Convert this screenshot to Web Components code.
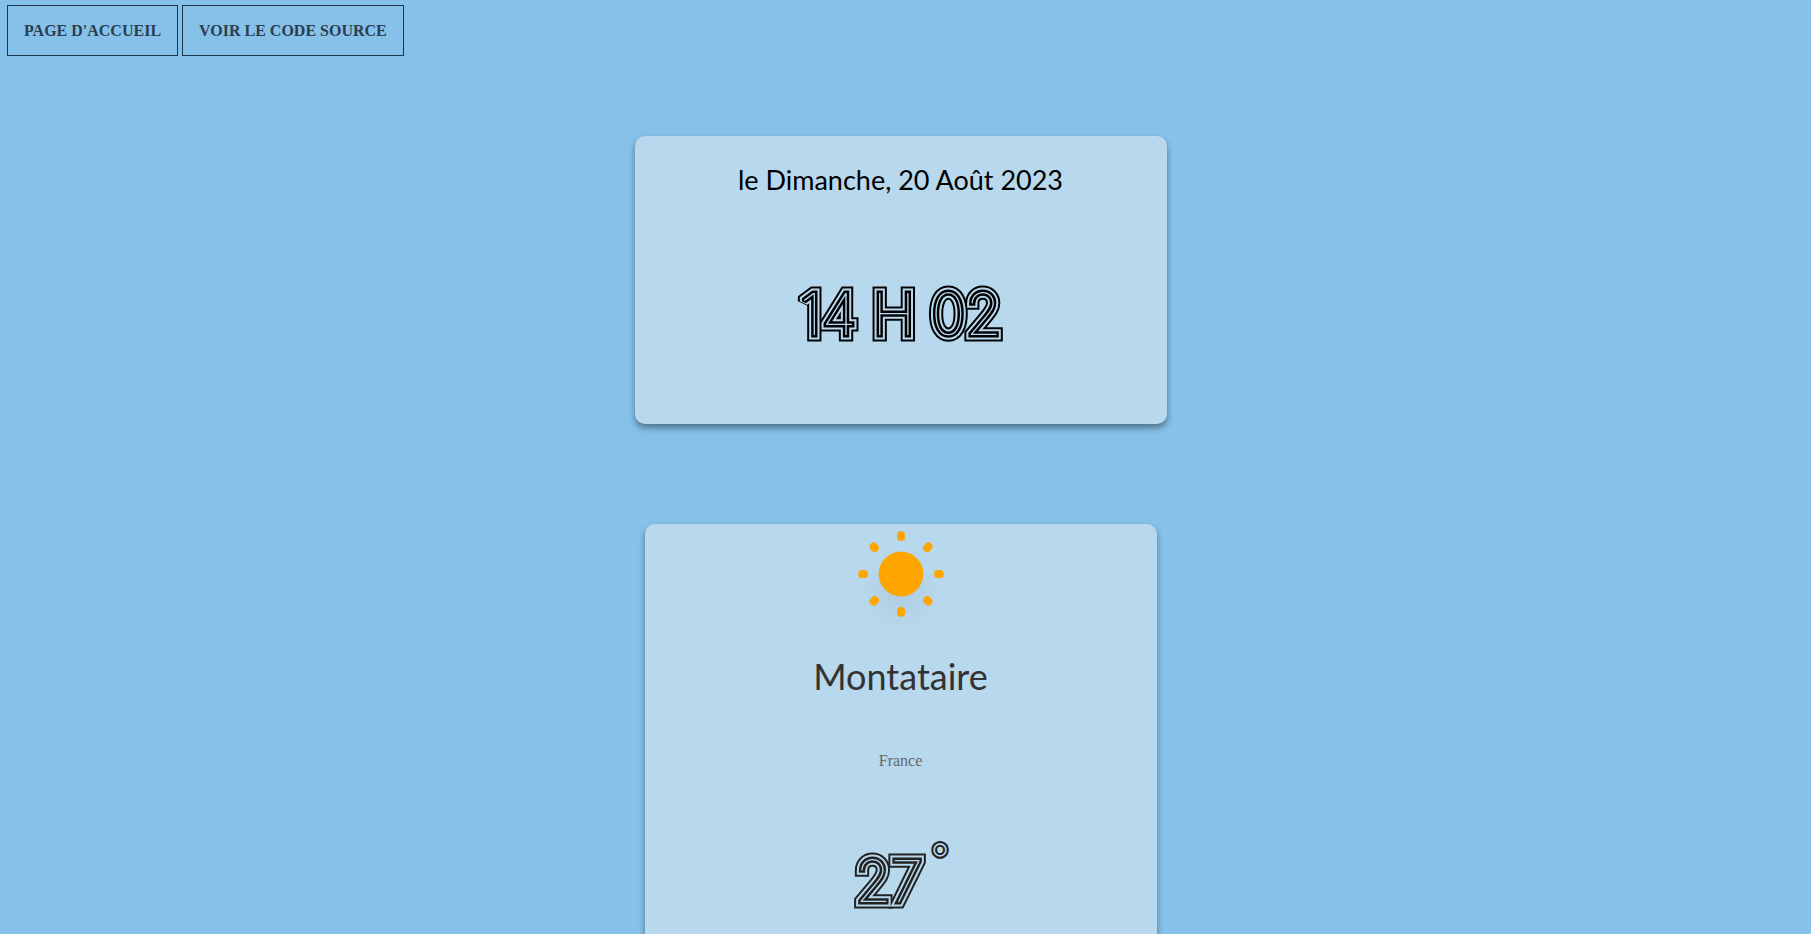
<!DOCTYPE html>
<html lang="fr">
<head>
<meta charset="utf-8">
<title>Météo</title>
<style>
  body { margin: 0; background: #85c1e9; font: 16px/24px "Liberation Serif", serif; color: #000; }
</style>
</head>
<body>
<weather-app></weather-app>
<script>
const define = (name, html, init) => {
  const template = document.createElement('template');
  template.innerHTML = html;
  customElements.define(name, class extends HTMLElement {
    constructor() {
      super();
      this.attachShadow({ mode: 'open' }).append(template.content.cloneNode(true));
    }
    connectedCallback() { if (init) init(this); }
  });
};

define('nav-link', `
  <style>
    :host { display: block; }
    a { display: block; padding: 16px; border: 1px solid #1f3349; color: #2c3e50;
        font-weight: bold; line-height: 17px; text-decoration: none; text-transform: uppercase; }
    a:hover { background: #b8d8ed; }
  </style>
  <a href="#"><slot></slot></a>`);

define('info-card', `
  <style>
    :host { display: flex; flex-direction: column; align-items: center; box-sizing: border-box;
            width: 100%; border-radius: 10px; background: var(--card);
            box-shadow: 0 4px 6px rgba(0, 0, 0, .4); text-align: center; }
  </style>
  <slot></slot>`);

/* Inline lettering: nested strokes around a light face leave parallel lines. */
define('neon-text', `
  <style>
    :host { display: block; align-self: stretch; }
    svg { display: block; width: 100%; height: 64px; overflow: visible;
          font: 100 58px Inter, sans-serif; text-anchor: middle; stroke-linejoin: miter; stroke-miterlimit: 2; }
    .outer { fill: var(--ink); stroke: var(--ink); stroke-width: 13px; }
    .gap { fill: var(--card); stroke: var(--card); stroke-width: 9px; }
    .inner { fill: var(--card); stroke: var(--ink); stroke-width: 5px; paint-order: stroke; }
    .unit { font-size: 46px; font-weight: 500; fill: var(--card); stroke: var(--ink); stroke-width: 2px; }
  </style>
  <svg>
    <g class="outer"><text id="label" x="50%" y="52"></text></g>
    <use class="gap" href="#label"/>
    <use class="inner" href="#label"/>
  </svg>`,
  host => {
    const label = host.shadowRoot.querySelector('#label');
    label.textContent = host.getAttribute('value');
    const unit = host.getAttribute('unit');
    if (unit) {
      label.setAttribute('dx', '-12');
      const mark = document.createElementNS('http://www.w3.org/2000/svg', 'text');
      mark.setAttribute('class', 'unit');
      mark.setAttribute('x', '50%');
      mark.setAttribute('dx', '39');
      mark.setAttribute('y', '26');
      mark.textContent = unit;
      host.shadowRoot.querySelector('svg').append(mark);
    }
  });

define('sun-icon', `
  <style>
    :host { display: block; }
    svg { display: block; overflow: visible; }
    .disc { filter: drop-shadow(0 18px 12px rgba(80, 90, 120, .09)); }
  </style>
  <svg width="100" height="100" viewBox="-50 -50 100 100" fill="orange" aria-hidden="true">
    <circle class="disc" r="22.4"/>
    <g id="rays"></g>
  </svg>`,
  host => {
    host.shadowRoot.querySelector('#rays').innerHTML = [0, 45, 90, 135, 180, 225, 270, 315].map(a =>
      '<rect x="-4" y="-42.7" width="8" height="9.6" rx="3.6" transform="rotate(' + a + ')"/>').join('');
  });

define('weather-app', `
  <style>
    :host { display: block; --card: #b8d8ed; }
    nav { display: flex; gap: 4px; padding: 5px 7px 0; }
    main { display: grid; justify-items: center; gap: 100px; padding: 80px 10px 100px 0; }
    .clock { max-width: 532px; min-height: 288px; padding-top: 24px; gap: 83px; }
    .city { max-width: 512px; min-height: 480px; }
    h1, h2, p { margin: 0; font-weight: normal; }
    h1 { font: 27px/40px Lato, sans-serif; }
    h2 { margin-top: 28px; color: #333; font: 36px/48px Lato, sans-serif; }
    p { margin-top: 49px; color: #666; }
    neon-text { --ink: #000; }
    .temp { --ink: #222; margin-top: 77px; }
  </style>
  <nav>
    <nav-link>Page d'accueil</nav-link>
    <nav-link>Voir le code source</nav-link>
  </nav>
  <main>
    <info-card class="clock">
      <h1>le Dimanche, 20 Août 2023</h1>
      <neon-text value="14 H 02"></neon-text>
    </info-card>
    <info-card class="city">
      <sun-icon></sun-icon>
      <h2>Montataire</h2>
      <p>France</p>
      <neon-text class="temp" value="27" unit="°"></neon-text>
    </info-card>
  </main>`);
</script>
</body>
</html>
